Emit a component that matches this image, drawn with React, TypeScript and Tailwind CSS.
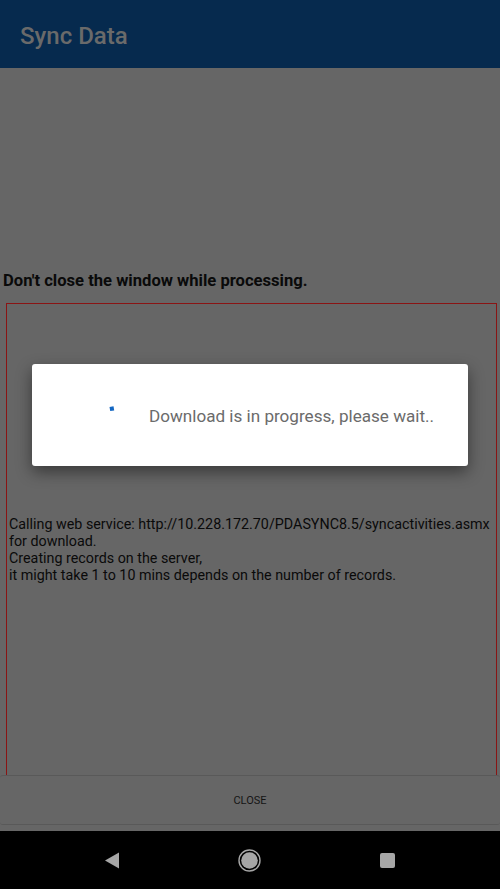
import React from "react";

const lines = [
  "Calling web service: http://10.228.172.70/PDASYNC8.5/syncactivities.asmx",
  "for download.",
  "Creating records on the server,",
  "it might take 1 to 10 mins depends on the number of records.",
];

export default function App() {
  return (
    <div
      className="relative flex h-[889px] w-[500px] flex-col overflow-hidden bg-[#666666]"
      style={{ fontFamily: "Roboto, 'Liberation Sans', sans-serif" }}
    >
      {/* app bar */}
      <div className="flex h-[68px] shrink-0 items-center bg-[#062a4e] px-[20px] pt-[3px]">
        <span className="text-[24px] font-medium text-[#6a6a6a]">Sync Data</span>
      </div>

      {/* content */}
      <div className="flex flex-1 flex-col">
        <div className="pt-[203px] pl-[3px] text-[16.6px] leading-[20px] font-bold text-[#0a0a0a]">
          Don't close the window while processing.
        </div>
        <div className="mx-[6px] mt-[12px] mr-[3px] flex-1 border border-b-0 border-[#8a1414] pt-[212px] pl-[2px]">
          <div className="text-[14.3px] leading-[17px] text-[#0a0a0a]">
            {lines.map((l) => (
              <div key={l}>{l}</div>
            ))}
          </div>
        </div>
        <div className="flex h-[50px] items-center justify-center rounded-[3px] border-y border-[#595959] pt-[2px] text-[11px] text-[#151515]">
          CLOSE
        </div>
        <div className="h-[6px]" />
      </div>

      {/* nav bar */}
      <div className="flex h-[58px] shrink-0 items-center bg-black">
        <div className="flex items-center gap-[98px] pl-[91px]">
          <div className="flex w-[40px] justify-center pl-[1px]">
            <svg width="16" height="17" viewBox="0 0 16 17">
              <path d="M15 0.5 L15 16.5 L1 8.5 Z" fill="#a6a6a6" />
            </svg>
          </div>
          <div className="flex w-[40px] justify-center">
            <svg width="23" height="23" viewBox="0 0 23 23">
              <circle cx="11.5" cy="11.5" r="10.5" fill="none" stroke="#a6a6a6" strokeWidth="1.4" />
              <circle cx="11.5" cy="11.5" r="8.3" fill="#a6a6a6" />
            </svg>
          </div>
          <div className="flex w-[40px] justify-center">
            <div className="h-[15px] w-[15px] rounded-[2px] bg-[#a6a6a6]" />
          </div>
        </div>
      </div>

      {/* progress dialog */}
      <div className="absolute top-[364px] left-[32px] flex h-[102px] w-[436px] items-center rounded-[3px] bg-white pt-[3px] shadow-[0_6px_16px_rgba(0,0,0,0.45)]">
        <div className="relative ml-[78px] h-[10px] w-[10px]">
          <svg
            className="absolute top-[-7px] left-[-2px]"
            width="8"
            height="8"
            viewBox="0 0 8 8"
          >
            <path d="M1.5 2 L5.5 1.2 L6.2 5.5 L2.2 6 Z" fill="#1467c2" />
          </svg>
        </div>
        <span className="ml-[29px] text-[17.1px] text-[#6b6b6b]">
          Download is in progress, please wait..
        </span>
      </div>
    </div>
  );
}
